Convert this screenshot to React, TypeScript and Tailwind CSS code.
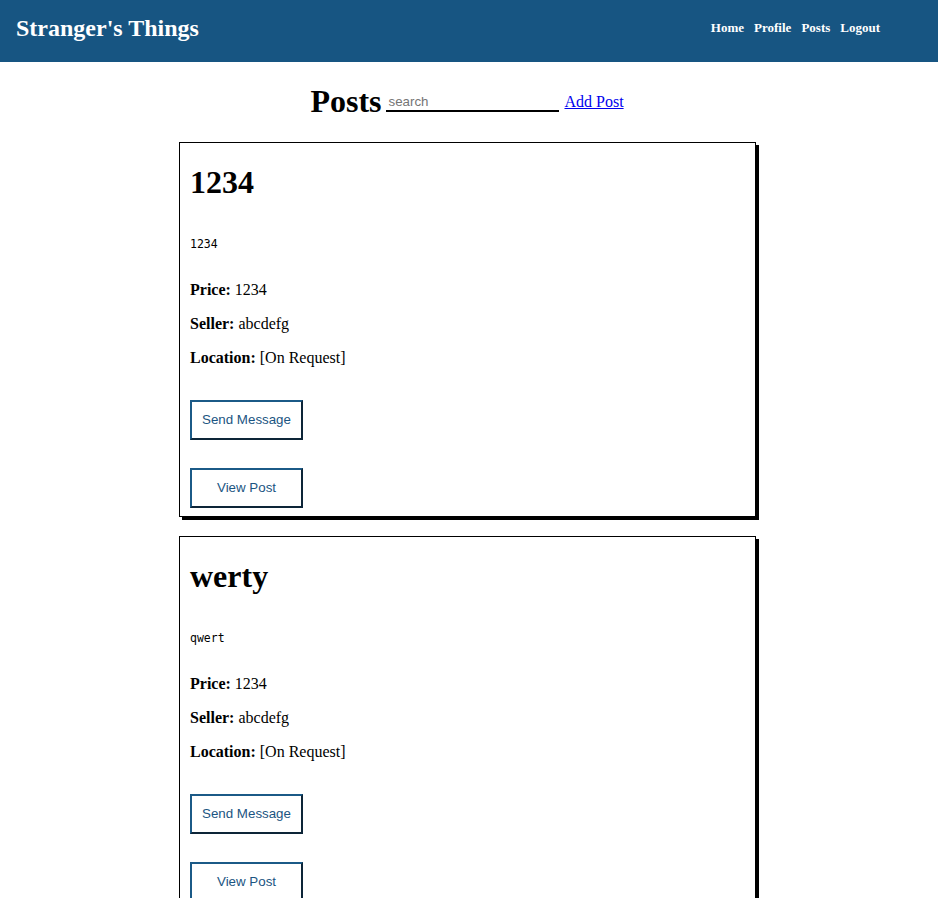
import React from "react";

interface Post {
  id: string;
  title: string;
  description: string;
  price: string;
  seller: string;
  location: string;
}

const posts: Post[] = [
  {
    id: "1",
    title: "1234",
    description: "1234",
    price: "1234",
    seller: "abcdefg",
    location: "[On Request]",
  },
  {
    id: "2",
    title: "werty",
    description: "qwert",
    price: "1234",
    seller: "abcdefg",
    location: "[On Request]",
  },
];

const navLinks = ["Home", "Profile", "Posts", "Logout"];

function Header() {
  return (
    <header className="flex h-[62px] items-start bg-[#175582] text-white">
      <h1 className="ml-[16px] mt-[14px] text-[24px] font-bold leading-[28px]">
        Stranger's Things
      </h1>
      <nav className="ml-auto mr-[58px] mt-[20px] flex gap-[10px] text-[13px] font-bold leading-[15px]">
        {navLinks.map((link) => (
          <a key={link} href="#" className="text-white no-underline">
            {link}
          </a>
        ))}
      </nav>
    </header>
  );
}

// Outset-looking button used for card actions
function CardButton({ label, className = "" }: { label: string; className?: string }) {
  return (
    <button
      className={`block h-[40px] w-[113px] border-2 border-solid border-t-[#1b5a87] border-l-[#1b5a87] border-r-[#0d2538] border-b-[#0d2538] bg-white text-center font-['Liberation_Sans',Arial,sans-serif] text-[13.33px] text-[#1b5582] ${className}`}
    >
      {label}
    </button>
  );
}

function PostCard({ post, first }: { post: Post; first: boolean }) {
  return (
    <div
      className={`w-[577px] border border-black bg-white px-[10px] pb-[8px] shadow-[3px_3px_0_black] ${
        first ? "" : "mt-[19px]"
      }`}
    >
      <h1 className="mt-[21px] text-[32px] font-bold leading-[37px]">{post.title}</h1>
      <p className="mt-[37px] font-['DejaVu_Sans_Mono',monospace] text-[11.5px] leading-[13px]">
        {post.description}
      </p>
      <p className="mt-[30px] text-[16px] leading-[18px]">
        <b>Price:</b> {post.price}
      </p>
      <p className="mt-[16px] text-[16px] leading-[18px]">
        <b>Seller:</b> {post.seller}
      </p>
      <p className="mt-[16px] text-[16px] leading-[18px]">
        <b>Location:</b> {post.location}
      </p>
      <CardButton label="Send Message" className="mt-[33px]" />
      <CardButton label="View Post" className="mt-[28px]" />
    </div>
  );
}

export default function App() {
  return (
    <div className="min-h-screen bg-white font-['Liberation_Serif','Times_New_Roman',serif] text-black">
      <Header />
      <div className="mb-[22px] mt-[21px] flex items-center justify-center gap-[5px] pr-[4px]">
        <h1 className="text-[32px] font-bold leading-[37px]">Posts</h1>
        <input
          type="text"
          placeholder="search"
          className="h-[21px] w-[173px] border-0 border-b-2 border-solid border-b-black px-[2px] pt-[2px] font-['Liberation_Sans',Arial,sans-serif] text-[13.33px] leading-[15px] outline-none placeholder:text-[#757575]"
        />
        <a href="#" className="text-[16px] leading-[18px] text-[#0000ee] underline">
          Add Post
        </a>
      </div>
      <div className="flex flex-col items-center pb-[20px] pr-[3px]">
        {posts.map((post, i) => (
          <PostCard key={post.id} post={post} first={i === 0} />
        ))}
      </div>
    </div>
  );
}
